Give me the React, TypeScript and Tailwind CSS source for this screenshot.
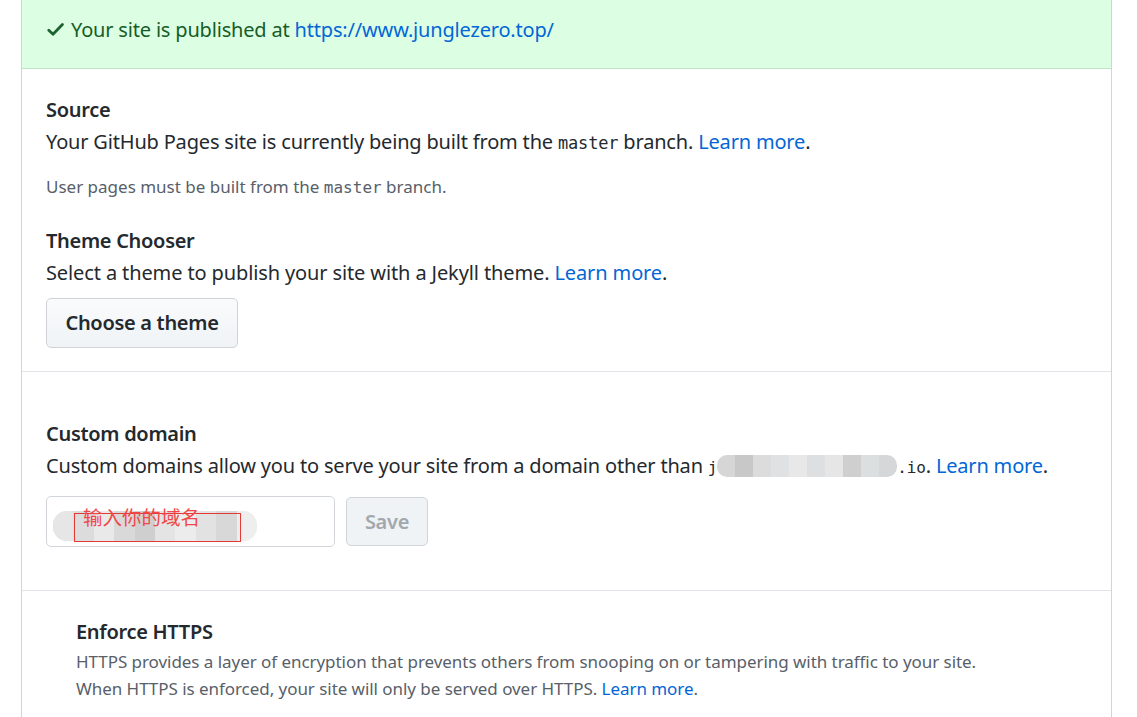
import React from "react";

const font = { fontFamily: '"Noto Sans", "Open Sans", sans-serif' };
const mono = { fontFamily: '"DejaVu Sans Mono", monospace' };

function Check() {
  return (
    <svg width="17" height="17" viewBox="0 0 17 17" className="inline-block mr-[7px] -mt-[4px]">
      <polyline points="1.8,9.2 6,13.2 15.4,3.6" fill="none" stroke="#1c6330" strokeWidth="2.8" strokeLinecap="round" strokeLinejoin="round" />
    </svg>
  );
}

function Blur({ w }: { w: number }) {
  const shades = ["#d6d6d6", "#c8c8c8", "#dcdcdc", "#e0e1e2", "#e8e8e8", "#dedfe0", "#e6e6e6", "#cfcfcf", "#dcdfe0", "#d6d7d8"];
  return (
    <span className="inline-flex h-[22px] align-middle -mt-[4px] overflow-hidden rounded-[10px]" style={{ width: w }}>
      {shades.map((c, i) => (
        <span key={i} className="flex-1 h-full" style={{ background: c }} />
      ))}
    </span>
  );
}

export default function App() {
  return (
    <div className="min-h-[717px] bg-white text-[#24292e]" style={font}>
      <div className="ml-[21px] w-[1091px] border-x border-[#d1d5da]">
        <div className="h-[69px] bg-[#dcffe4] border-b border-[#bfe5c9] pl-[25px] pt-[14px] text-[20px] leading-[32px] text-[#165c26] tracking-[-0.18px]">
          <Check />
          Your site is published at{" "}
          <a className="text-[#0366d6]">https://www.junglezero.top/</a>
        </div>

        <div className="pl-[24px] pt-[25px] pb-[23px] border-b border-[#e1e4e8]">
          <div className="text-[20px] leading-[32px] font-semibold tracking-[-0.3px]">Source</div>
          <div className="text-[20px] leading-[32px] tracking-[-0.18px]">
            Your GitHub Pages site is currently being built from the{" "}
            <code className="text-[17px]" style={mono}>master</code> branch.{" "}
            <a className="text-[#0366d6]">Learn more</a>.
          </div>
          <div className="mt-[16px] text-[17px] leading-[24px] text-[#586069]">
            User pages must be built from the{" "}
            <code className="text-[16px]" style={mono}>master</code> branch.
          </div>
          <div className="mt-[25px] text-[20px] leading-[32px] font-semibold tracking-[-0.3px]">Theme Chooser</div>
          <div className="text-[20px] leading-[32px] tracking-[-0.12px]">
            Select a theme to publish your site with a Jekyll theme.{" "}
            <a className="text-[#0366d6]">Learn more</a>.
          </div>
          <button className="mt-[9px] h-[50px] w-[192px] rounded-[5px] border border-[#cfd3d7] bg-gradient-to-b from-[#fafbfc] to-[#eff3f6] text-[20px] font-semibold text-[#24292e] tracking-[-0.3px]">
            Choose a theme
          </button>
        </div>

        <div className="pl-[24px] pt-[46px] pb-[43px] border-b border-[#e1e4e8]">
          <div className="text-[20px] leading-[32px] font-semibold tracking-[-0.3px]">Custom domain</div>
          <div className="text-[20px] leading-[32px] tracking-[-0.18px]">
            Custom domains allow you to serve your site from a domain other than{" "}
            <code className="text-[16px]" style={mono}>j</code>
            <Blur w={180} />
            <code className="text-[16px]" style={mono}>.io</code>.{" "}
            <a className="text-[#0366d6]">Learn more</a>.
          </div>
          <div className="mt-[12px] flex items-center gap-[11px]">
            <div className="relative h-[51px] w-[289px] rounded-[5px] border border-[#d1d5da] bg-white">
              <div className="absolute left-[6px] top-[14px] h-[30px] w-[204px] rounded-[14px] bg-[#eaeaea] flex overflow-hidden">
                {["#e6e6e6", "#dcdcdc", "#e9e9e9", "#d9d9d9", "#cfcfcf", "#e4e4e4", "#ececec", "#e2e2e2", "#d8d8d8", "#eeeeee"].map((c, i) => (
                  <span key={i} className="flex-1 h-full" style={{ background: c }} />
                ))}
              </div>
              <div className="absolute left-[27px] top-[16px] h-[29px] w-[167px] border border-[#e53935]" />
              <div
                className="absolute left-[36px] top-[7px] text-[19.5px] leading-[26px] text-[#f04848]"
                style={{ fontFamily: '"Noto Sans CJK SC", sans-serif' }}
              >
                输入你的域名
              </div>
            </div>
            <button className="h-[49px] w-[82px] rounded-[5px] border border-[#d1d5da] bg-[#eff3f6] text-[20px] font-semibold text-[#a3a8ad] tracking-[-0.3px]">
              Save
            </button>
          </div>
        </div>

        <div className="pl-[54px] pt-[25px] pb-[20px]">
          <div className="text-[20px] leading-[32px] font-semibold tracking-[-0.3px]">Enforce HTTPS</div>
          <div className="text-[17px] leading-[27px] text-[#586069] tracking-[-0.05px]">
            HTTPS provides a layer of encryption that prevents others from snooping on or tampering with traffic to your site.
            <br />
            When HTTPS is enforced, your site will only be served over HTTPS.{" "}
            <a className="text-[#0366d6]">Learn more</a>.
          </div>
        </div>
      </div>
    </div>
  );
}
